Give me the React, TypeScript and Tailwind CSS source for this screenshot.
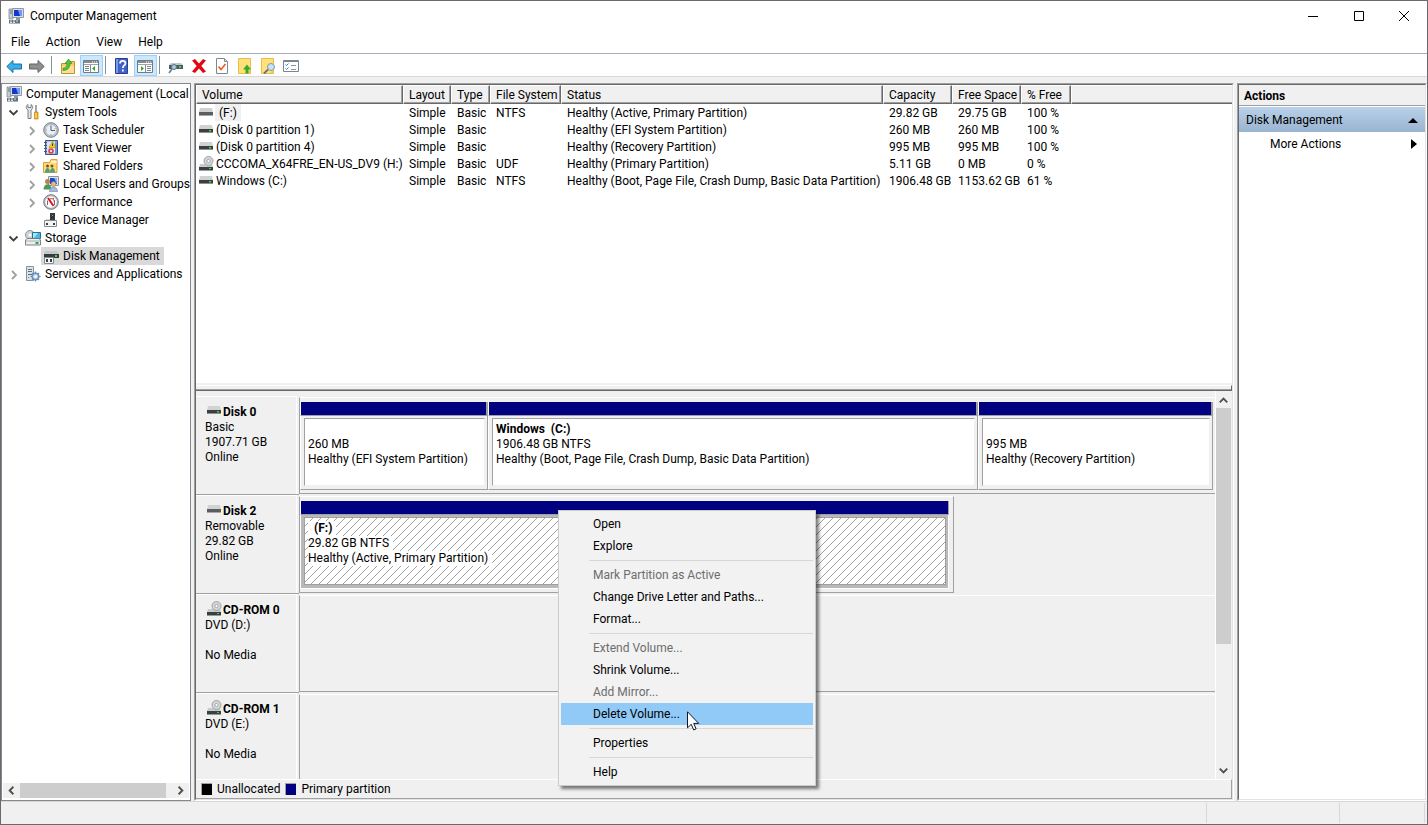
import type { ReactNode } from "react";
import classNames from "clsx";

const treeItems = [
  { text: "Computer Management (Local", level: 0, icon: "computer" },
  { text: "System Tools", level: 1, icon: "tools", open: true },
  { text: "Task Scheduler", level: 2, icon: "clock", open: false },
  { text: "Event Viewer", level: 2, icon: "event", open: false },
  { text: "Shared Folders", level: 2, icon: "shared", open: false },
  { text: "Local Users and Groups", level: 2, icon: "users", open: false },
  { text: "Performance", level: 2, icon: "performance", open: false },
  { text: "Device Manager", level: 2, icon: "device" },
  { text: "Storage", level: 1, icon: "storage", open: true },
  { text: "Disk Management", level: 2, icon: "disk", selected: true },
  { text: "Services and Applications", level: 1, icon: "services", open: false },
];

const columns = [
  { text: "Volume", width: "w-[207px]" },
  { text: "Layout", width: "w-[48px]" },
  { text: "Type", width: "w-[39px]" },
  { text: "File System", width: "w-[71px]" },
  { text: "Status", width: "w-[322px]" },
  { text: "Capacity", width: "w-[69px]" },
  { text: "Free Space", width: "w-[69px]" },
  { text: "% Free", width: "w-[50px]" },
];

const volumes = [
  { icon: "removable", cells: ["(F:)", "Simple", "Basic", "NTFS", "Healthy (Active, Primary Partition)", "29.82 GB", "29.75 GB", "100 %"] },
  { icon: "drive", cells: ["(Disk 0 partition 1)", "Simple", "Basic", "", "Healthy (EFI System Partition)", "260 MB", "260 MB", "100 %"] },
  { icon: "drive", cells: ["(Disk 0 partition 4)", "Simple", "Basic", "", "Healthy (Recovery Partition)", "995 MB", "995 MB", "100 %"] },
  { icon: "cdrom", cells: ["CCCOMA_X64FRE_EN-US_DV9 (H:)", "Simple", "Basic", "UDF", "Healthy (Primary Partition)", "5.11 GB", "0 MB", "0 %"] },
  { icon: "drive", cells: ["Windows (C:)", "Simple", "Basic", "NTFS", "Healthy (Boot, Page File, Crash Dump, Basic Data Partition)", "1906.48 GB", "1153.62 GB", "61 %"] },
];

const disks = [
  {
    name: "Disk 0",
    icon: "drive",
    lines: ["Basic", "1907.71 GB", "Online"],
    share: 100,
    partitions: [
      { name: "", size: "260 MB", status: "Healthy (EFI System Partition)", grow: 188 },
      { name: "Windows  (C:)", size: "1906.48 GB NTFS", status: "Healthy (Boot, Page File, Crash Dump, Basic Data Partition)", grow: 490 },
      { name: "", size: "995 MB", status: "Healthy (Recovery Partition)", grow: 235 },
    ],
  },
  {
    name: "Disk 2",
    icon: "removable",
    lines: ["Removable", "29.82 GB", "Online"],
    share: 71.5,
    partitions: [
      { name: "  (F:)", size: "29.82 GB NTFS", status: "Healthy (Active, Primary Partition)", grow: 1, selected: true },
    ],
  },
  { name: "CD-ROM 0", icon: "cdrom", lines: ["DVD (D:)", "", "No Media"], share: 100, partitions: [] },
  { name: "CD-ROM 1", icon: "cdrom", lines: ["DVD (E:)", "", "No Media"], share: 100, partitions: [] },
];

const menuGroups = [
  [{ text: "Open" }, { text: "Explore" }],
  [
    { text: "Mark Partition as Active", disabled: true },
    { text: "Change Drive Letter and Paths..." },
    { text: "Format..." },
  ],
  [
    { text: "Extend Volume...", disabled: true },
    { text: "Shrink Volume..." },
    { text: "Add Mirror...", disabled: true },
    { text: "Delete Volume...", hover: true },
  ],
  [{ text: "Properties" }],
  [{ text: "Help" }],
];

export default function App() {
  return (
    <div className="relative flex h-screen flex-col overflow-hidden border border-[#6b696b] bg-[#f0f0f0] font-[Roboto,'Open_Sans',sans-serif] text-xs text-black">
      <TitleBar />
      <nav className="flex h-[22px] items-center bg-white pl-[2px]">
        {["File", "Action", "View", "Help"].map((text) => (
          <button key={text} className="h-5 px-2">
            {text}
          </button>
        ))}
      </nav>
      <Toolbar />
      <main className="flex min-h-0 flex-1 gap-[3px] pt-[6px]">
        <Tree />
        <Sunken className="min-w-0 flex-1">
          <VolumeList />
          <div className="h-2 shrink-0 bg-[#f0f0f0] pt-[2px]">
            <div className="h-[6px] border-t border-r border-b border-t-white border-r-[#696969] border-b-[#696969] shadow-[inset_0_-1px_#a0a0a0]" />
          </div>
          <div className="flex min-h-0 shrink grow-[388] basis-0 bg-[#f0f0f0]">
            <div className="min-w-0 flex-1 overflow-hidden pt-[5px]">
              {disks.map((disk) => (
                <DiskRow key={disk.name} disk={disk} />
              ))}
            </div>
            <div className="flex w-[17px] flex-col border-l border-white">
              <ScrollButton label="Scroll up" d="M4 11l4-4 4 4" className="h-[17px] w-[15px]" />
              <div className="min-h-0 flex-1">
                <div className="h-2/3 w-[15px] bg-[#cdcdcd]" />
              </div>
              <ScrollButton label="Scroll down" d="M4 6l4 4 4-4" className="h-[17px] w-[15px]" />
            </div>
          </div>
          <div className="flex h-5 shrink-0 items-center border-t border-r border-b border-t-white border-r-[#a0a0a0] border-b-[#a0a0a0] bg-[#f0f0f0] pl-[5px]">
            <span className="mr-[5px] h-3 w-[11px] border-t border-l border-[#a0a0a0] bg-black" />
            <span className="mr-[5px]">Unallocated</span>
            <span className="mr-[5px] h-3 w-[11px] border-t border-l border-[#a0a0a0] bg-[#000080]" />
            <span>Primary partition</span>
          </div>
        </Sunken>
        <Sunken className="w-[190px] shrink-0">
          <h2 className="flex h-[21px] items-center border-b border-[#a0a0a0] bg-[#f0f0f0] pt-px pl-[5px] font-bold">Actions</h2>
          <button className="mt-px flex h-[25px] items-center justify-between bg-linear-to-b from-[#b9d1ea] to-[#99b4d1] pr-[7px] pl-[7px]">
            Disk Management
            <svg width="10" height="6" viewBox="0 0 10 6">
              <path d="M0 6L5 1l5 5z" />
            </svg>
          </button>
          <button className="flex h-6 items-center justify-between pr-2 pl-[31px]">
            More Actions
            <svg width="6" height="10" viewBox="0 0 6 10">
              <path d="M0 0l6 5-6 5z" />
            </svg>
          </button>
        </Sunken>
      </main>
      <footer className="flex h-[23px] shrink-0 justify-end border-t border-[#d7d7d7] pt-px pr-[2px] pb-px">
        <div className="w-[133px] border-l border-[#d7d7d7]" />
        <div className="w-[86px] border-x border-[#d7d7d7]" />
      </footer>
      <ContextMenu />
    </div>
  );
}

const TitleBar = () => (
  <header className="flex h-[30px] shrink-0 items-center bg-white pl-[7px]">
    <Icon name="computer" />
    <h1 className="ml-[6px] flex-1">Computer Management</h1>
    <button aria-label="Minimize" className="grid h-full w-[46px] place-items-center">
      <svg width="10" height="10" stroke="#000" fill="none">
        <path d="M0 5.5h10" />
      </svg>
    </button>
    <button aria-label="Maximize" className="grid h-full w-[45px] place-items-center">
      <svg width="10" height="10" stroke="#000" fill="none">
        <path d="M.5.5h9v9h-9z" />
      </svg>
    </button>
    <button aria-label="Close" className="grid h-full w-[46px] place-items-center">
      <svg width="10" height="10" stroke="#000" fill="none">
        <path d="M0 0l10 10M10 0L0 10" />
      </svg>
    </button>
  </header>
);

const Toolbar = () => (
  <div className="flex h-6 shrink-0 border-y border-t-[#a9adb9] border-b-[#d7d7d7] bg-white pt-px pl-[2px]">
    <ToolButton label="Back" icon="back" />
    <ToolButton label="Forward" icon="forward" />
    <ToolDivider />
    <ToolButton label="Up one level" icon="folderUp" />
    <ToolButton label="Show/Hide console tree" icon="treePane" pressed />
    <ToolDivider />
    <ToolButton label="Help topics" icon="help" />
    <ToolButton label="Show/Hide action pane" icon="actionPane" pressed />
    <ToolDivider />
    <ToolButton label="Connect" icon="connect" />
    <ToolButton label="Delete" icon="delete" />
    <ToolButton label="Properties" icon="check" />
    <ToolButton label="Open" icon="noteUp" />
    <ToolButton label="Explore" icon="noteSearch" />
    <ToolButton label="Settings" icon="list" />
  </div>
);

const ToolDivider = () => <div className="mt-px mr-[5px] mb-[2px] ml-[2px] w-px bg-[#8d8d8d]" />;

const ToolButton = ({ label, icon, pressed }: { label: string; icon: string; pressed?: boolean }) => (
  <button
    aria-label={label}
    className={classNames("flex h-[21px] w-[23px] items-end border pb-px pl-[2px]", {
      "border-[#99d1ff] bg-[#cce8ff]": pressed,
      "border-transparent": !pressed,
    })}
  >
    <Icon name={icon} />
  </button>
);

const Sunken = ({ className, children }: { className: string; children: ReactNode }) => (
  <section className={classNames("flex border border-t-[#a0a0a0] border-r-white border-b-white border-l-[#a0a0a0]", className)}>
    <div className="flex min-w-0 flex-1 flex-col border border-t-[#696969] border-r-[#e3e3e3] border-b-[#e3e3e3] border-l-[#696969] bg-white">
      {children}
    </div>
  </section>
);

const Tree = () => (
  <aside className="flex w-[190px] shrink-0 flex-col border border-[#828790] bg-white">
    <ul className="min-h-0 flex-1 overflow-hidden pt-px">
      {treeItems.map(({ text, level, icon, open, selected }) => (
        <li
          key={text}
          className={classNames("flex h-[18px] items-center whitespace-nowrap", {
            "pl-[2px]": level === 0,
            "pl-1": level === 1,
            "pl-[22px]": level === 2,
          })}
        >
          {level > 0 && (
            <span className="w-[17px] shrink-0">
              {open !== undefined && (
                <svg width="16" height="16" viewBox="0 0 16 16" fill="none" strokeWidth="1.8" stroke={open ? "#404040" : "#a0a0a0"}>
                  <path d={open ? "M3.500 6.500l4 4 4-4" : "M6 5l4 4-4 4"} />
                </svg>
              )}
            </span>
          )}
          <button
            className={classNames("flex h-[18px] items-center gap-1 pl-[2px]", {
              "bg-[#d9d9d9] pr-1": selected,
            })}
          >
            <Icon name={icon} />
            {text}
          </button>
        </li>
      ))}
    </ul>
    <div className="mx-px mb-[2px] flex h-[15px] bg-[#f0f0f0]">
      <ScrollButton label="Scroll left" d="M10 4L6 8l4 4" className="h-[15px] w-[17px]" />
      <div className="flex-1">
        <div className="h-full w-[146px] bg-[#cdcdcd]" />
      </div>
      <ScrollButton label="Scroll right" d="M6 4l4 4-4 4" className="h-[15px] w-[17px]" />
    </div>
  </aside>
);

const ScrollButton = ({ label, d, className }: { label: string; d: string; className: string }) => (
  <button aria-label={label} className={classNames("grid shrink-0 place-items-center", className)}>
    <svg width="15" height="15" viewBox="0 0 16 16" fill="none" stroke="#505050" strokeWidth="2">
      <path d={d} />
    </svg>
  </button>
);

const VolumeList = () => (
  <div className="min-h-0 shrink grow-[298] basis-0 overflow-hidden bg-white">
    <div className="bg-[#f0f0f0] shadow-[inset_0_1px_#ffffff,inset_0_-1px_#696969]">
      <table className="w-full table-fixed border-separate border-spacing-0 text-left whitespace-nowrap">
        <thead>
          <tr>
            {columns.map(({ text, width }) => (
              <th
                key={text}
                className={classNames(
                  "h-[19px] border border-t-white border-r-[#696969] border-b-[#696969] border-l-white p-0 pl-[5px] font-normal shadow-[inset_-1px_-1px_#a0a0a0]",
                  width
                )}
              >
                {text}
              </th>
            ))}
            <th aria-label="Spare" className="border border-t-white border-r-0 border-b-[#696969] border-l-white p-0 shadow-[inset_0_-1px_#a0a0a0]" />
          </tr>
        </thead>
        <tbody className="bg-white">
          {volumes.map(({ icon, cells }, row) => (
            <tr key={cells[0]}>
              {cells.map((text, index) =>
                index === 0 ? (
                  <td key={index} className="h-[17px] p-0 pl-[3px]">
                    <div className="flex h-[17px] items-end">
                      <Icon name={icon} />
                      <span
                        className={classNames("h-[17px] pt-px leading-4", {
                          "bg-[#f0f0f0] px-1": row === 0,
                          "pl-px": row > 0,
                        })}
                      >
                        {text}
                      </span>
                    </div>
                  </td>
                ) : (
                  <td key={index} className="h-[17px] p-0 pl-[6px]">
                    {text}
                  </td>
                )
              )}
              <td />
            </tr>
          ))}
        </tbody>
      </table>
    </div>
  </div>
);

const DiskRow = ({ disk }: { disk: (typeof disks)[number] }) => (
  <div className="flex h-[99px]">
    <div className="flex w-[103px] shrink-0 border-b border-[#a0a0a0]">
      <div className="w-[101px] border-t border-r border-white pt-2 pl-[9px] leading-[15px]">
        <div className="flex h-[15px] items-center font-bold">
          <span className="ml-[2px] flex pb-1">
            <Icon name={disk.icon} />
          </span>
          {disk.name}
        </div>
        {disk.lines.map((line, index) => (
          <p key={index} className="h-[15px]">
            {line}
          </p>
        ))}
      </div>
    </div>
    <div className="min-w-0 flex-1">
      <div
        className={classNames("mt-px flex h-[97px] border border-t-white border-b-[#a0a0a0] border-l-[#a0a0a0]", {
          "border-r-0 pr-[2px]": disk.share === 100,
          "border-r-[#a0a0a0] pr-1": disk.share < 100,
          "pt-1 pb-[3px]": disk.partitions.length > 0,
        })}
        style={{ width: `${disk.share}%` }}
      >
        {disk.partitions.map((partition) => (
          <Partition key={partition.status} {...partition} />
        ))}
      </div>
    </div>
  </div>
);

type PartitionProps = { name: string; size: string; status: string; grow: number; selected?: boolean };

const Partition = ({ name, size, status, grow, selected }: PartitionProps) => (
  <div className="flex min-w-0 basis-0 flex-col" style={{ flexGrow: grow }}>
    <div
      className={classNames("h-[14px] shrink-0 border-b border-l border-b-[#a0a0a0] border-l-white bg-[#000080]", {
        "border-r-2 border-r-[#a0a0a0]": !selected,
        "border-r border-r-[#a0a0a0]": selected,
      })}
    />
    <div
      className={classNames("flex-1 border-r border-b border-l border-l-white pt-[2px] pr-[2px] pb-[3px] pl-[3px]", {
        "border-r-[#a0a0a0] border-b-[#a0a0a0]": !selected,
        "border-r-white border-b-white bg-[#b9b9b9]": selected,
      })}
    >
      <div
        className={classNames("h-full border pt-[3px] pl-[3px] leading-[15px] whitespace-pre", {
          "border-t-[#a0a0a0] border-r-[#f0f0f0] border-b-[#f0f0f0] border-l-[#a0a0a0] bg-white": !selected,
          "border-[#a0a0a0] bg-white bg-[linear-gradient(135deg,transparent_46%,#a0a0a0_46%,#a0a0a0_54%,transparent_54%)] bg-size-[8px_8px]":
            selected,
        })}
      >
        {[name, size, status].map((line, index) => (
          <p key={index} className={classNames("h-[15px]", { "font-bold": index === 0 })}>
            <span className={classNames("inline-block h-[15px] bg-white", { "pr-1": selected })}>{line}</span>
          </p>
        ))}
      </div>
    </div>
  </div>
);

const ContextMenu = () => (
  <div
    role="menu"
    className="absolute top-[509px] left-[557px] w-[258px] border border-[#cccccc] bg-[#f2f2f2] p-[2px] shadow-[3px_3px_3px_rgba(0,0,0,0.5)]"
  >
    {menuGroups.map((group, index) => (
      <div key={index}>
        {index > 0 && <div className="my-[3px] ml-7 h-px bg-[#d7d7d7]" />}
        {group.map(({ text, disabled, hover }: { text: string; disabled?: boolean; hover?: boolean }) => (
          <button
            key={text}
            role="menuitem"
            disabled={disabled}
            className={classNames("block h-[22px] w-full pl-8 text-left", {
              "text-[#6d6d6d]": disabled,
              "bg-[#91c9f7]": hover,
            })}
          >
            {text}
          </button>
        ))}
      </div>
    ))}
    <svg className="absolute top-[200px] left-[128px]" width="13" height="20" viewBox="0 0 13 20">
      <path d="M.5.8v16l3.700-3.500 2.500 5.600 2.400-1-2.400-5.500h5z" fill="#fff" stroke="#111827" />
    </svg>
  </div>
);

const Icon = ({ name }: { name: string }) => (
  <svg width="16" height="16" viewBox="0 0 16 16" className="shrink-0" aria-hidden="true">
    {icons[name]}
  </svg>
);

const noteSheet = (
  <>
    <path d="M1.500.5h12v15h-12z" fill="#ffe07a" stroke="#e8bd4a" />
    <path d="M10 15h3v-3z" fill="#f4c94f" />
  </>
);

const paneWindow = (
  <>
    <path d="M.5 2.500h15v12H.5z" fill="#fff" stroke="#757b80" />
    <path d="M1 3h14v2H1z" fill="#858b90" />
    <path d="M9 4h1m1 0h1m1 0h1" stroke="#fff" />
    <path d="M1 6.500h14" stroke="#9da3a7" />
  </>
);

const icons: Record<string, ReactNode> = {
  computer: (
    <>
      <path d="M1 1h4v10H1z" fill="#c5ccd2" stroke="#7d8a94" strokeWidth=".8" />
      <path d="M2 3h2M2 5h2" stroke="#66737d" />
      <path d="M4.500.5h11v9h-11z" fill="#d8dde2" stroke="#8f9aa5" />
      <path d="M6 2h8v6H6z" fill="#1635c9" />
      <path d="M10 2h4v6h-2z" fill="#6f9cf2" />
      <path d="M8 10h4v2H8z" fill="#8b969f" />
      <path d="M1 12h11v3.500H1z" fill="#63717a" />
      <path d="M2 13h2m1 0h2m1 0h2M2 14.500h2m1 0h2" stroke="#dce3e7" />
    </>
  ),
  tools: (
    <>
      <path d="M3 .5C.5 2 .8 4.800 3 6V14.500h3V6C8 4.800 8.500 2 6 .5V3.500H3z" fill="#dfe3e6" stroke="#6d757b" strokeWidth=".9" />
      <path d="M10 1h2v7h-2z" fill="#a0a8ad" />
      <path d="M9.500 8h3.500v7H9.500z" fill="#f2b21b" stroke="#c47f0b" strokeWidth=".7" />
      <path d="M11 9v5" stroke="#ffe28a" />
    </>
  ),
  clock: (
    <>
      <circle cx="8" cy="8" r="7.300" fill="#c2c7cb" stroke="#777f86" />
      <circle cx="8" cy="8" r="5.500" fill="#e6f0fa" stroke="#98a2aa" strokeWidth=".6" />
      <path d="M8 3.500v5h4" fill="none" stroke="#555c62" />
      <path d="M8 12v1M3 8h1M12 6v1" stroke="#cf9a36" />
    </>
  ),
  event: (
    <>
      <path d="M2.500.5h12v14h-12z" fill="#8fa8d6" stroke="#3c5790" />
      <path d="M4 1.500h8v12H4z" fill="#dbe4f5" />
      <path d="M1 2.500h3M1 5.500h3M1 8.500h3M1 11.500h3" stroke="#4c5a70" />
      <path d="M9.500 1.500l3.500 6H6z" fill="#ffcd19" stroke="#b38500" strokeWidth=".6" />
      <path d="M9.500 3.500v2.500" stroke="#333" />
      <circle cx="8" cy="11" r="2.800" fill="#dc4545" />
      <path d="M7 10l2 2m0-2l-2 2" stroke="#fff" strokeWidth=".8" />
      <path d="M13 2v12" stroke="#5d7fbe" />
    </>
  ),
  shared: (
    <>
      <path d="M.5 4.500h6l1.500-3h6v13H.5z" fill="#ffd978" stroke="#d59a2b" strokeWidth=".9" />
      <path d="M8.500 3h5v2h-5z" fill="#fff4cf" />
      <circle cx="4.500" cy="8" r="1.500" fill="#755329" />
      <circle cx="9" cy="8" r="1.500" fill="#755329" />
      <path d="M2 14.500c0-6 5-6 5 0zM7 14.500c0-6 5-6 5 0z" fill="#4da07a" />
    </>
  ),
  users: (
    <>
      <path d="M5.500.5h10v9h-10z" fill="#dfe5ec" stroke="#8795a3" />
      <path d="M7 2h7v6H7z" fill="#2046ce" />
      <path d="M11 2h3v6z" fill="#83abf4" />
      <circle cx="4.500" cy="5.500" r="2.500" fill="#b98250" />
      <path d="M.5 13.500c0-7 8-7 8 0z" fill="#4a9a53" />
      <circle cx="10.500" cy="8" r="2.500" fill="#e1b78c" stroke="#8c6744" strokeWidth=".5" />
      <path d="M6.500 15.500c0-6 8-6 8 0z" fill="#a4b9dc" stroke="#6c82a9" strokeWidth=".6" />
    </>
  ),
  performance: (
    <>
      <circle cx="8" cy="8" r="7.300" fill="#b7bcc0" stroke="#737b82" />
      <circle cx="8" cy="8" r="5.700" fill="#fff" />
      <path d="M4.500 11V6.500M11.500 11V6.500M5 4.500h1m4 0h1" stroke="#657079" />
      <path d="M5 4l5.500 8" stroke="#d7171f" strokeWidth="2" />
      <path d="M7 5c2-1 4 0 4.500 3" fill="none" stroke="#d7171f" />
    </>
  ),
  device: (
    <>
      <path d="M7 1h5v7H7z" fill="#343a3e" />
      <path d="M9 3h1v1H9z" fill="#35d84a" />
      <path d="M2 9l1-2h4v2h6l1 2H2z" fill="#d8dadc" />
      <path d="M1.500 8.500h12v6h-12z" fill="#f4f4f4" stroke="#858b90" />
      <path d="M3 11h2v2H3zM10 11h2v2h-2z" fill="#3b4045" />
      <path d="M7 8h5V5H7z" fill="#343a3e" />
    </>
  ),
  storage: (
    <>
      <circle cx="5" cy="5" r="4.500" fill="#cdd2d6" stroke="#8d959b" />
      <circle cx="5" cy="5" r="1.500" fill="#fff" />
      <path d="M7.500 2.500h8v6h-8z" fill="#43b9e7" stroke="#29718f" />
      <path d="M8 3h5L9 8H8z" fill="#a8e4f8" />
      <path d="M.5 10L2 8.500h12l1.500 1.500v5H.5z" fill="#eceff1" stroke="#6d757b" strokeWidth=".9" />
      <path d="M1 11h14" stroke="#a9afb4" />
      <path d="M10.500 12h3v2h-3z" fill="#32a849" />
    </>
  ),
  disk: (
    <>
      <path d="M2 3h12l2 3H1z" fill="#c4c6c8" />
      <path d="M1 6h15v4H1z" fill="#373c40" />
      <path d="M12 7h2v2h-2z" fill="#37dc4a" />
      <path d="M1.500 9.500h9v6h-9z" fill="#f4f4f4" stroke="#858b90" />
      <path d="M3 11h2v3H3zM7 11h2v3H7z" fill="#3b4045" />
    </>
  ),
  services: (
    <>
      <path d="M1.500.5h7v14h-7z" fill="#dce3e8" stroke="#84929d" />
      <path d="M3 3.500h4M3 5.500h4M3 8.500h4" stroke="#5d7280" />
      <path d="M3 11h1v1H3z" fill="#38a954" />
      <circle cx="10.500" cy="10.500" r="3.200" fill="#c3d5ea" stroke="#6d91bc" strokeWidth="1.400" />
      <path d="M10.500 5.500v2m0 6v2M5.500 10.500h2m6 0h2M7 7l1.500 1.500m4 4L14 14M7 14l1.500-1.500m4-4L14 7" stroke="#6d91bc" strokeWidth="1.300" />
      <circle cx="10.500" cy="10.500" r="1.200" fill="#fff" />
    </>
  ),
  drive: (
    <>
      <path d="M1 3h12l1 4H0z" fill="#d0d2d4" />
      <path d="M0 7h14v4H0z" fill="#3b3f42" />
      <path d="M0 10.500h14" stroke="#8d9194" />
      <path d="M10 8h2v1.500h-2z" fill="#2fe03c" />
    </>
  ),
  removable: (
    <>
      <path d="M1 3h12l1 4H0z" fill="#d0d2d4" />
      <path d="M0 7h14v4H0z" fill="#5b5e61" />
      <path d="M0 10.500h14" stroke="#a6a9ab" />
    </>
  ),
  cdrom: (
    <>
      <path d="M1 8h12l1 3H0z" fill="#c8cacc" />
      <path d="M0 11h14v3.500H0z" fill="#3b3f42" />
      <path d="M10 12h2v1h-2z" fill="#2fe03c" />
      <circle cx="9.500" cy="5" r="4.500" fill="#d2d6d8" stroke="#989da1" strokeWidth=".9" />
      <circle cx="9.500" cy="5" r="1.600" fill="#fff" stroke="#989da1" strokeWidth=".8" />
    </>
  ),
  back: <path d="M.8 8.500L7 2.500v3.500h8.500v5H7v3.500z" fill="#38b1ea" stroke="#1b6fa8" />,
  forward: <path d="M15.200 8.500L9 2.500v3.500H.5v5H9v3.500z" fill="#8f8f8f" stroke="#636363" />,
  folderUp: (
    <>
      <path d="M1.500 5.500h5l1.500-2h6.500v12h-13z" fill="#f5cd6d" stroke="#c3912c" />
      <path d="M2 8h12v7H2z" fill="#ffe195" />
      <path d="M3 10c3 0 4-2 4-4.500H5L8.500 1 12 5.500h-2c0 4-2 7-7 7z" fill="#52c234" stroke="#2f8c1e" strokeWidth=".6" />
    </>
  ),
  treePane: (
    <>
      {paneWindow}
      <path d="M7.500 7v7" stroke="#858b90" />
      <path d="M2 8.500h4M2 10.500h4M2 12.500h4" stroke="#7d868c" />
      <path d="M12 8v5l-3-2.500z" fill="#2fa82c" />
    </>
  ),
  actionPane: (
    <>
      {paneWindow}
      <path d="M8.500 7v7" stroke="#858b90" />
      <path d="M10 8.500h4M10 10.500h4M10 12.500h4" stroke="#7d868c" />
      <path d="M4 8v5l3-2.500z" fill="#2fa82c" />
    </>
  ),
  help: (
    <>
      <path d="M1.500.5h12v15h-12z" fill="#3f62c8" stroke="#243f96" />
      <path d="M2 1h2v14H2z" fill="#7f9be6" />
      <path d="M6 5.500c0-3.500 5.500-3.500 5.500 0 0 2-2.700 2-2.700 4.500" fill="none" stroke="#fff" strokeWidth="1.700" />
      <path d="M8 11.500h1.700v2H8z" fill="#fff" />
    </>
  ),
  connect: (
    <>
      <path d="M3 5h10l2 2H1z" fill="#c1c8cc" />
      <path d="M1 7h14v4H1z" fill="#4f5b63" />
      <path d="M11 8h2v2h-2z" fill="#37dc4a" />
      <circle cx="6" cy="9" r="2.500" fill="#a9cbe0" stroke="#60717d" />
      <path d="M4 11L1 15" stroke="#5f8098" strokeWidth="1.700" />
    </>
  ),
  delete: <path d="M1 2.500L4 1l4 4.500L12 1l3 1.500L10.300 8 15 13.500 12 15l-4-4.500L4 15l-3-1.500L5.700 8z" fill="#df0914" />,
  check: (
    <>
      <path d="M2.500.5h8l3 3v12h-11z" fill="#fff" stroke="#7f8890" />
      <path d="M10.500.5v3h3" fill="#d6dade" stroke="#7f8890" />
      <path d="M4.500 8.500l2.500 3 4.500-5.500" fill="none" stroke="#ea5c22" strokeWidth="1.600" />
    </>
  ),
  noteUp: (
    <>
      {noteSheet}
      <path d="M8.500 15.500v-4H6l4-5 4 5h-2.500v4z" fill="#36ab2a" />
    </>
  ),
  noteSearch: (
    <>
      {noteSheet}
      <path d="M8 11.500L4 15.500" stroke="#68727a" strokeWidth="1.800" />
      <circle cx="11" cy="9" r="3.500" fill="#c4e5f6" stroke="#7f98a8" />
    </>
  ),
  list: (
    <>
      <path d="M.5 2.500h15v11H.5z" fill="#fff" stroke="#7b8790" />
      <path d="M1 3h14v1H1z" fill="#7b8790" />
      <path d="M2.500 6.500l1 1 2-2M2.500 10.500l1 1 2-2" fill="none" stroke="#2d7fd0" />
      <path d="M8 7.500h5M8 11.500h5" stroke="#8c979f" />
    </>
  ),
};
